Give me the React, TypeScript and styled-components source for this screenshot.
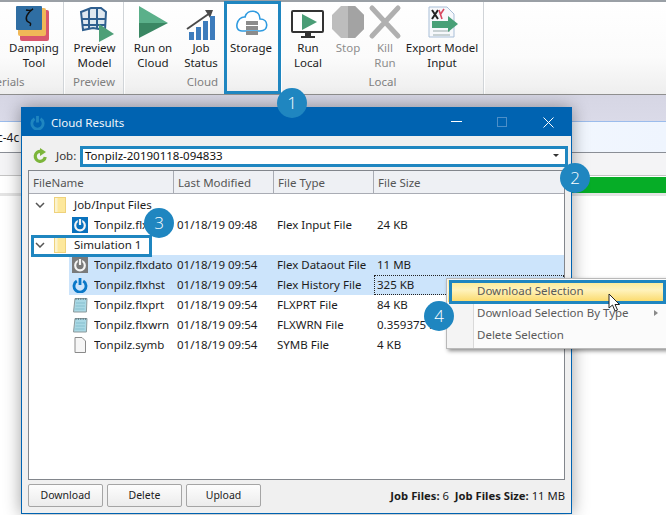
import React from "react";
import styled, { createGlobalStyle } from "styled-components";

const Global = createGlobalStyle`
  html, body { margin: 0; padding: 0; background: #fff; }
  body { font-family: "Noto Sans", "Liberation Sans", sans-serif; }
`;

const Page = styled.div`
  position: relative;
  width: 666px;
  height: 515px;
  overflow: hidden;
  background: #fff;
  color: #1c1c1c;
  font-size: 11.5px;
`;

const Ribbon = styled.div`
  display: flex;
  height: 92px;
  border-top: 2px solid #9aa0a6;
  border-bottom: 1px solid #8f8f8f;
  background: linear-gradient(#ffffff 0%, #fbfbfb 60%, #eeeeee 100%);
`;

const Group = styled.div<{ $w: number }>`
  box-sizing: border-box;
  width: ${(p) => p.$w}px;
  flex: none;
  display: flex;
  flex-direction: column;
  border-right: 1px solid #d0d4d8;
  box-shadow: 1px 0 0 #fff;
  overflow: hidden;
  margin-right: 1px;
`;

const Buttons = styled.div<{ $pad?: number }>`
  display: flex;
  flex: 1;
  padding-left: ${(p) => p.$pad ?? 0}px;
`;

const RibbonButton = styled.div<{ $w: number; $off?: boolean }>`
  width: ${(p) => p.$w}px;
  flex: none;
  display: flex;
  flex-direction: column;
  align-items: center;
  text-align: center;
  line-height: 15px;
  white-space: nowrap;
  color: ${(p) => (p.$off ? "#8d8d8d" : "#1c1c1c")};
  svg { display: block; height: 36px; width: 36px; margin-top: 2px; flex: none; overflow: visible; }
`;

const GroupLabel = styled.div<{ $shift?: number }>`
  height: 20px;
  line-height: 16px;
  text-align: center;
  color: #7f7f7f;
  white-space: nowrap;
  margin-left: ${(p) => p.$shift ?? 0}px;
`;

const Backdrop = styled.div`
  display: flex;
  flex-direction: column;
`;

const BackStrip = styled.div<{ $h: number; $bg: string; $line?: string }>`
  height: ${(p) => p.$h}px;
  background: ${(p) => p.$bg};
  border-bottom: ${(p) => (p.$line ? `1px solid ${p.$line}` : "none")};
  display: flex;
  align-items: center;
  justify-content: space-between;
`;

const BackText = styled.span`
  margin-left: -3px;
  font-size: 12px;
`;

const GreenBar = styled.div`
  width: 100px;
  height: 16px;
  background: #06ad27;
`;

const Dialog = styled.div`
  position: absolute;
  left: 21px;
  top: 107px;
  width: 549px;
  height: 405px;
  border: 1px solid #0063b1;
  background: #f0f0f0;
  box-shadow: 0 0 16px rgba(0, 0, 0, 0.38);
  display: flex;
  flex-direction: column;
`;

const TitleBar = styled.div`
  height: 28px;
  flex: none;
  background: #0063b1;
  color: #f2f6fa;
  display: flex;
  align-items: center;
  padding-left: 8px;
`;

const TitleText = styled.span`
  margin-left: 6px;
  flex: 1;
`;

const WindowButton = styled.div`
  width: 46px;
  height: 28px;
  display: flex;
  align-items: center;
  justify-content: center;
`;

const Body = styled.div`
  flex: 1;
  display: flex;
  flex-direction: column;
  padding: 10px 6px 6px 6px;
  min-height: 0;
`;

const JobRow = styled.div`
  display: flex;
  align-items: center;
  height: 20px;
  padding-left: 4px;
`;

const JobLabel = styled.span`
  margin-left: 8px;
  width: 26px;
  color: #333;
  padding-bottom: 1px;
`;

const Combo = styled.div`
  flex: 1;
  height: 18px;
  background: #fff;
  display: flex;
  align-items: center;
  justify-content: space-between;
  padding: 0 6px 1px 3px;
  box-sizing: border-box;
  color: #111;
`;

const Caret = styled.span`
  width: 0;
  height: 0;
  border-left: 3px solid transparent;
  border-right: 3px solid transparent;
  border-top: 3px solid #333;
`;

const ListBox = styled.div`
  flex: 1;
  margin-top: 4px;
  border: 1px solid #82868c;
  background: #fff;
  min-height: 0;
`;

const HeaderRow = styled.div`
  display: grid;
  grid-template-columns: 145px 100px 100px 1fr;
  height: 22px;
  background: #eef0f4;
  border-bottom: 1px solid #a9acb4;
  margin-bottom: 1px;
`;

const HeaderCell = styled.div`
  line-height: 23px;
  padding-left: 4px;
  color: #555;
  border-right: 1px solid #a9acb4;
  &:last-child { border-right: none; }
`;

const Row = styled.div`
  display: grid;
  grid-template-columns: 145px 100px 100px 1fr;
  height: 20px;
  line-height: 20px;
  white-space: nowrap;
`;

const NameCell = styled.div<{ $indent: number; $selected?: boolean }>`
  display: flex;
  align-items: center;
  overflow: hidden;
  padding-left: ${(p) => p.$indent}px;
  background: ${(p) =>
    p.$selected ? "linear-gradient(to right, transparent 40px, #cce4fb 40px)" : "transparent"};
`;

const FileName = styled.span`
  margin-left: 6px;
  flex: 1;
  line-height: 20px;
  overflow: hidden;
`;

const IconSlot = styled.span`
  display: flex;
  align-items: center;
  svg { display: block; }
`;

const FolderSlot = styled(IconSlot)`
  margin-left: 9px;
`;

const Cell = styled.div<{ $selected?: boolean; $focus?: boolean }>`
  padding-left: 3px;
  background: ${(p) => (p.$selected ? "#cce4fb" : "transparent")};
  outline: ${(p) => (p.$focus ? "1px dotted #222" : "none")};
  outline-offset: -1px;
`;

const GroupName = styled.span`
  margin-left: 8px;
  line-height: 20px;
`;

const Footer = styled.div`
  display: flex;
  align-items: center;
  gap: 4px;
  height: 23px;
  margin-top: 4px;
`;

const PushButton = styled.div`
  width: 73px;
  height: 21px;
  border: 1px solid #a5a5a5;
  border-radius: 2px;
  background: linear-gradient(#fdfdfd, #ececec);
  text-align: center;
  line-height: 20px;
  font-size: 10.5px;
`;

const Status = styled.div`
  margin-left: auto;
  font-size: 11.25px;
  white-space: nowrap;
  b { font-weight: 700; }
`;

const Menu = styled.div`
  position: absolute;
  left: 446px;
  top: 278px;
  width: 222px;
  height: 67px;
  padding: 1px;
  border: 1px solid #b9b9b9;
  background: linear-gradient(to right, #f4f4f4 26px, #d9d9d9 26px, #d9d9d9 27px, #fbfbfb 27px);
  box-shadow: 2px 2px 4px rgba(0, 0, 0, 0.45);
  display: flex;
  flex-direction: column;
  z-index: 3;
`;

const MenuItem = styled.div<{ $hot?: boolean }>`
  height: 22px;
  line-height: 22px;
  padding-left: 29px;
  color: #5a5a5a;
  position: relative;
  background: ${(p) =>
    p.$hot ? "linear-gradient(#fde98e, #fff3bd 45%, #fbd968)" : "transparent"};
`;

const SubArrow = styled.span`
  position: absolute;
  right: 12px;
  top: 8px;
  width: 0;
  height: 0;
  border-top: 3.5px solid transparent;
  border-bottom: 3.5px solid transparent;
  border-left: 4px solid #8a8a8a;
`;

const Callout = styled.div<{ $x: number; $y: number; $w: number; $h: number }>`
  position: absolute;
  left: ${(p) => p.$x}px;
  top: ${(p) => p.$y}px;
  width: ${(p) => p.$w}px;
  height: ${(p) => p.$h}px;
  box-sizing: border-box;
  border: 3px solid #1f86c0;
  z-index: 4;
  pointer-events: none;
`;

const Badge = styled.div<{ $x: number; $y: number }>`
  position: absolute;
  left: ${(p) => p.$x - 15}px;
  top: ${(p) => p.$y - 15}px;
  width: 30px;
  height: 30px;
  border-radius: 50%;
  background: #1f86c0;
  color: #fff;
  font-family: "Open Sans", "Noto Sans", sans-serif;
  font-weight: 300;
  font-size: 17px;
  line-height: 30px;
  text-align: center;
  z-index: 5;
`;

const Pointer = styled.svg`
  position: absolute;
  left: 608px;
  top: 293px;
  z-index: 6;
`;

const Damping = () => (
  <svg viewBox="0 0 36 36">
    <rect x="4" y="6" width="29" height="31" rx="2" fill="#d9566d" />
    <rect x="2" y="4" width="28" height="28" rx="2" fill="#f0b858" />
    <rect x="0" y="2" width="26" height="24" rx="1" fill="#2f6ea3" />
    <path d="M10 6 c4 1 6 0 7-1 c-6 4-8 9-6 12 c2 2 5 1 3 5" fill="none" stroke="#111" strokeWidth="1.4" />
  </svg>
);
const Preview = () => (
  <svg viewBox="0 0 36 36">
    <path d="M4 8 L14 4 L24 4 L29 8 L28 26 L16 24 L6 26Z" fill="#dfe8f0" stroke="#2f5f8f" strokeWidth="2" />
    <path d="M4 15 L29 15 M5 21 L28 21 M12 5 L12 25 M20 4 L20 25" stroke="#2f5f8f" strokeWidth="2" />
    <path d="M22 20 L37 30 L22 38Z" fill="#4e9f78" />
  </svg>
);
const RunCloud = () => (
  <svg viewBox="0 0 36 36">
    <path d="M4 2 L33 19 L4 19Z" fill="#5bb08a" />
    <path d="M4 19 L33 19 L4 34Z" fill="#3a8763" />
  </svg>
);
const JobStatus = () => (
  <svg viewBox="0 0 36 36">
    <path d="M4 25 L27 9" stroke="#4a4a4a" strokeWidth="2" />
    <path d="M22 6 L30 6 L27 14Z" fill="#4a4a4a" />
    <rect x="6" y="28" width="5" height="8" fill="#3d7cbc" />
    <rect x="13" y="23" width="5" height="13" fill="#3d7cbc" />
    <rect x="20" y="17" width="5" height="19" fill="#3d7cbc" />
    <rect x="27" y="12" width="5" height="24" fill="#3d7cbc" />
  </svg>
);
const Storage = () => (
  <svg viewBox="0 0 36 36">
    <path d="M9 27 H27 C36 27 36 15 27 15 C27 5 14 5 12 13 C4 12 0 27 9 27Z" fill="#fff" stroke="#2f9be0" strokeWidth="1.6" />
    <rect x="13" y="17" width="12" height="4" fill="#8b8b8b" />
    <rect x="13" y="22" width="12" height="4" fill="#8b8b8b" />
    <rect x="13" y="27" width="12" height="4" fill="#8b8b8b" />
  </svg>
);
const RunLocal = () => (
  <svg viewBox="0 0 36 36">
    <rect x="2" y="7" width="31" height="21" rx="1" fill="#fff" stroke="#333" strokeWidth="2" />
    <path d="M12 10 L27 18 L12 26Z" fill="#4a9d76" />
    <rect x="15" y="29" width="6" height="4" fill="#333" />
    <rect x="11" y="32" width="14" height="2" fill="#333" />
  </svg>
);
const StopIcon = () => (
  <svg viewBox="0 0 36 36">
    <path d="M11 2 H25 L34 11 V25 L25 34 H11 L2 25 V11Z" fill="#bdbdbd" />
    <path d="M18 2 H25 L34 11 V25 L25 34 H18Z" fill="#a3a3a3" />
  </svg>
);
const KillIcon = () => (
  <svg viewBox="0 0 36 36">
    <path d="M5 4 L31 32 M31 4 L5 32" stroke="#b0b0b0" strokeWidth="5" strokeLinecap="round" />
  </svg>
);
const ExportIcon = () => (
  <svg viewBox="0 0 36 36">
    <path d="M5 3 H23 L30 10 V33 H5Z" fill="#f6f8fb" stroke="#a9bfd8" strokeWidth="1" />
    <path d="M8 6 L14 15 M14 6 L8 15" stroke="#222" strokeWidth="2" />
    <path d="M15 6 L18 15 M20 5 L16 11" stroke="#d8485f" strokeWidth="1.6" />
    <path d="M9 27 H26 M9 31 H26" stroke="#9aa" strokeWidth="1" />
    <path d="M8 17 H24 V12 L34 20 L24 28 V24 H8Z" fill="#48a077" />
  </svg>
);
const Refresh = () => (
  <svg width="16" height="16" viewBox="0 0 16 16">
    <path d="M9 3.4 A5 5 0 1 0 13.2 9" fill="none" stroke="#7cb53a" strokeWidth="3.2" />
    <path d="M8 0 L14 4 L8 8Z" fill="#7cb53a" />
  </svg>
);
const Power = ({ c = "#0a78c8", size = 16, sw = 2.8 }: { c?: string; size?: number; sw?: number }) => (
  <svg width={size} height={size} viewBox="0 0 16 16">
    <path d="M4.8 4 A6 6 0 1 0 11.2 4" fill="none" stroke={c} strokeWidth={sw} />
    <path d="M8 1 V8" stroke={c} strokeWidth={sw} />
  </svg>
);
const PowerTile = ({ bg }: { bg: string }) => (
  <svg width="16" height="16" viewBox="0 0 16 16">
    <rect width="16" height="16" fill={bg} />
    <circle cx="8" cy="8.5" r="4.8" fill="none" stroke="#f4f4f4" strokeWidth="2.2" />
    <path d="M8 1.5 V8" stroke={bg} strokeWidth="4.5" />
    <path d="M8 2 V8" stroke="#f4f4f4" strokeWidth="2.2" />
  </svg>
);
const Folder = () => (
  <svg width="12" height="16" viewBox="0 0 12 16">
    <rect x="0.5" y="0.5" width="11" height="15" fill="#fde89c" stroke="#efd27c" />
    <rect x="1" y="1" width="2.5" height="14" fill="#fbf3cf" />
  </svg>
);
const Chevron = () => (
  <svg width="10" height="6" viewBox="0 0 10 6">
    <path d="M1 1 L5 5 L9 1" fill="none" stroke="#555" strokeWidth="1.5" />
  </svg>
);
const Notes = () => (
  <svg width="16" height="16" viewBox="0 0 16 16">
    <path d="M3 1.5 H15 L14.4 15 H1.5Z" fill="#a9d8e4" stroke="#8c9a9c" strokeWidth="1" />
    <path d="M4 1 V3 M6.4 1 V3 M8.8 1 V3 M11.2 1 V3 M13.6 1 V3" stroke="#55707a" strokeWidth="0.8" />
    <path d="M4 6 H13 M3.6 9 H12.8 M3.2 12 H12.6" stroke="#86bfce" strokeWidth="1" />
  </svg>
);
const Blank = () => (
  <svg width="16" height="16" viewBox="0 0 16 16">
    <path d="M3 0.5 H10 L13.5 4 V15.5 H3Z" fill="#f6f6f6" stroke="#8a8a8a" strokeWidth="1" />
  </svg>
);
const Cursor = () => (
  <Pointer width="14" height="20" viewBox="0 0 14 20">
    <path d="M1 1 V15 L4.5 12 L7 18 L9.5 17 L7 11.5 H11.5Z" fill="#fff" stroke="#222" strokeWidth="1" />
  </Pointer>
);

const files = [
  { name: "Tonpilz.flxdato", icon: <PowerTile bg="#7a7a7a" />, date: "01/18/19 09:54", type: "Flex Dataout File", size: "11 MB", sel: true },
  { name: "Tonpilz.flxhst", icon: <Power />, date: "01/18/19 09:54", type: "Flex History File", size: "325 KB", sel: true, focus: true },
  { name: "Tonpilz.flxprt", icon: <Notes />, date: "01/18/19 09:54", type: "FLXPRT File", size: "84 KB" },
  { name: "Tonpilz.flxwrn", icon: <Notes />, date: "01/18/19 09:54", type: "FLXWRN File", size: "0.359375 KB" },
  { name: "Tonpilz.symb", icon: <Blank />, date: "01/18/19 09:54", type: "SYMB File", size: "4 KB" },
];

export default function App() {
  return (
    <Page>
      <Global />
      <Ribbon>
        <Group $w={64}>
          <Buttons $pad={4}>
            <RibbonButton $w={60}><Damping />Damping<br />Tool</RibbonButton>
          </Buttons>
          <GroupLabel $shift={-64}>Materials</GroupLabel>
        </Group>
        <Group $w={59}>
          <Buttons>
            <RibbonButton $w={59}><Preview />Preview<br />Model</RibbonButton>
          </Buttons>
          <GroupLabel>Preview</GroupLabel>
        </Group>
        <Group $w={156}>
          <Buttons>
            <RibbonButton $w={56}><RunCloud />Run on<br />Cloud</RibbonButton>
            <RibbonButton $w={40}><JobStatus />Job<br />Status</RibbonButton>
            <RibbonButton $w={60}><Storage />Storage</RibbonButton>
          </Buttons>
          <GroupLabel>Cloud</GroupLabel>
        </Group>
        <Group $w={202}>
          <Buttons $pad={4}>
            <RibbonButton $w={44}><RunLocal />Run<br />Local</RibbonButton>
            <RibbonButton $w={36} $off><StopIcon />Stop</RibbonButton>
            <RibbonButton $w={38} $off><KillIcon />Kill<br />Run</RibbonButton>
            <RibbonButton $w={76}><ExportIcon />Export Model<br />Input</RibbonButton>
          </Buttons>
          <GroupLabel>Local</GroupLabel>
        </Group>
      </Ribbon>
      <Backdrop>
        <BackStrip $h={26} $bg="linear-gradient(#d6d6e4, #dadae8)" $line="#9bbcec" />
        <BackStrip $h={30} $bg="linear-gradient(to right, #fff, #eff5fe)" $line="#8a8e96"><BackText>c-4c</BackText></BackStrip>
        <BackStrip $h={22} $bg="#f4f4f6" $line="#c4c4c4" />
        <BackStrip $h={1} $bg="#fff" />
        <BackStrip $h={16} $bg="#fff"><span /><GreenBar /></BackStrip>
        <BackStrip $h={3} $bg="#e4e4e4" />
      </Backdrop>
      <Dialog>
        <TitleBar>
          <Power c="#1f86c0" size={15} sw={3} />
          <TitleText>Cloud Results</TitleText>
          <WindowButton>
            <svg width="11" height="2"><rect width="11" height="1" fill="#fff" /></svg>
          </WindowButton>
          <WindowButton>
            <svg width="11" height="11"><rect x="0.5" y="0.5" width="9" height="9" fill="none" stroke="#4d8fc8" /></svg>
          </WindowButton>
          <WindowButton>
            <svg width="11" height="11"><path d="M0.5 0.5 L10.5 10.5 M10.5 0.5 L0.5 10.5" stroke="#fff" /></svg>
          </WindowButton>
        </TitleBar>
        <Body>
          <JobRow>
            <Refresh />
            <JobLabel>Job:</JobLabel>
            <Combo>Tonpilz-20190118-094833<Caret /></Combo>
          </JobRow>
          <ListBox>
            <HeaderRow>
              <HeaderCell>FileName</HeaderCell>
              <HeaderCell>Last Modified</HeaderCell>
              <HeaderCell>File Type</HeaderCell>
              <HeaderCell>File Size</HeaderCell>
            </HeaderRow>
            <Row>
              <NameCell $indent={6}>
                <IconSlot><Chevron /></IconSlot>
                <FolderSlot><Folder /></FolderSlot>
                <GroupName>Job/Input Files</GroupName>
              </NameCell>
            </Row>
            <Row>
              <NameCell $indent={43}>
                <IconSlot><PowerTile bg="#0a72bd" /></IconSlot>
                <FileName>Tonpilz.flx</FileName>
              </NameCell>
              <Cell>01/18/19 09:48</Cell>
              <Cell>Flex Input File</Cell>
              <Cell>24 KB</Cell>
            </Row>
            <Row>
              <NameCell $indent={6}>
                <IconSlot><Chevron /></IconSlot>
                <FolderSlot><Folder /></FolderSlot>
                <GroupName>Simulation 1</GroupName>
              </NameCell>
            </Row>
            {files.map((f) => (
              <Row key={f.name}>
                <NameCell $indent={43} $selected={f.sel}>
                  <IconSlot>{f.icon}</IconSlot>
                  <FileName>{f.name}</FileName>
                </NameCell>
                <Cell $selected={f.sel}>{f.date}</Cell>
                <Cell $selected={f.sel}>{f.type}</Cell>
                <Cell $selected={f.sel} $focus={f.focus}>{f.size}</Cell>
              </Row>
            ))}
          </ListBox>
          <Footer>
            <PushButton>Download</PushButton>
            <PushButton>Delete</PushButton>
            <PushButton>Upload</PushButton>
            <Status><b>Job Files:</b> 6&nbsp; <b>Job Files Size:</b> 11 MB</Status>
          </Footer>
        </Body>
      </Dialog>
      <Menu>
        <MenuItem $hot>Download Selection</MenuItem>
        <MenuItem>Download Selection By Type<SubArrow /></MenuItem>
        <MenuItem>Delete Selection</MenuItem>
      </Menu>
      <Callout $x={224} $y={1} $w={57} $h={93} />
      <Callout $x={80} $y={146} $w={488} $h={21} />
      <Callout $x={31} $y={235} $w={121} $h={22} />
      <Callout $x={449} $y={280} $w={217} $h={24} />
      <Badge $x={292} $y={103}>1</Badge>
      <Badge $x={575} $y={178}>2</Badge>
      <Badge $x={159} $y={223}>3</Badge>
      <Badge $x={439} $y={316}>4</Badge>
      <Cursor />
    </Page>
  );
}
